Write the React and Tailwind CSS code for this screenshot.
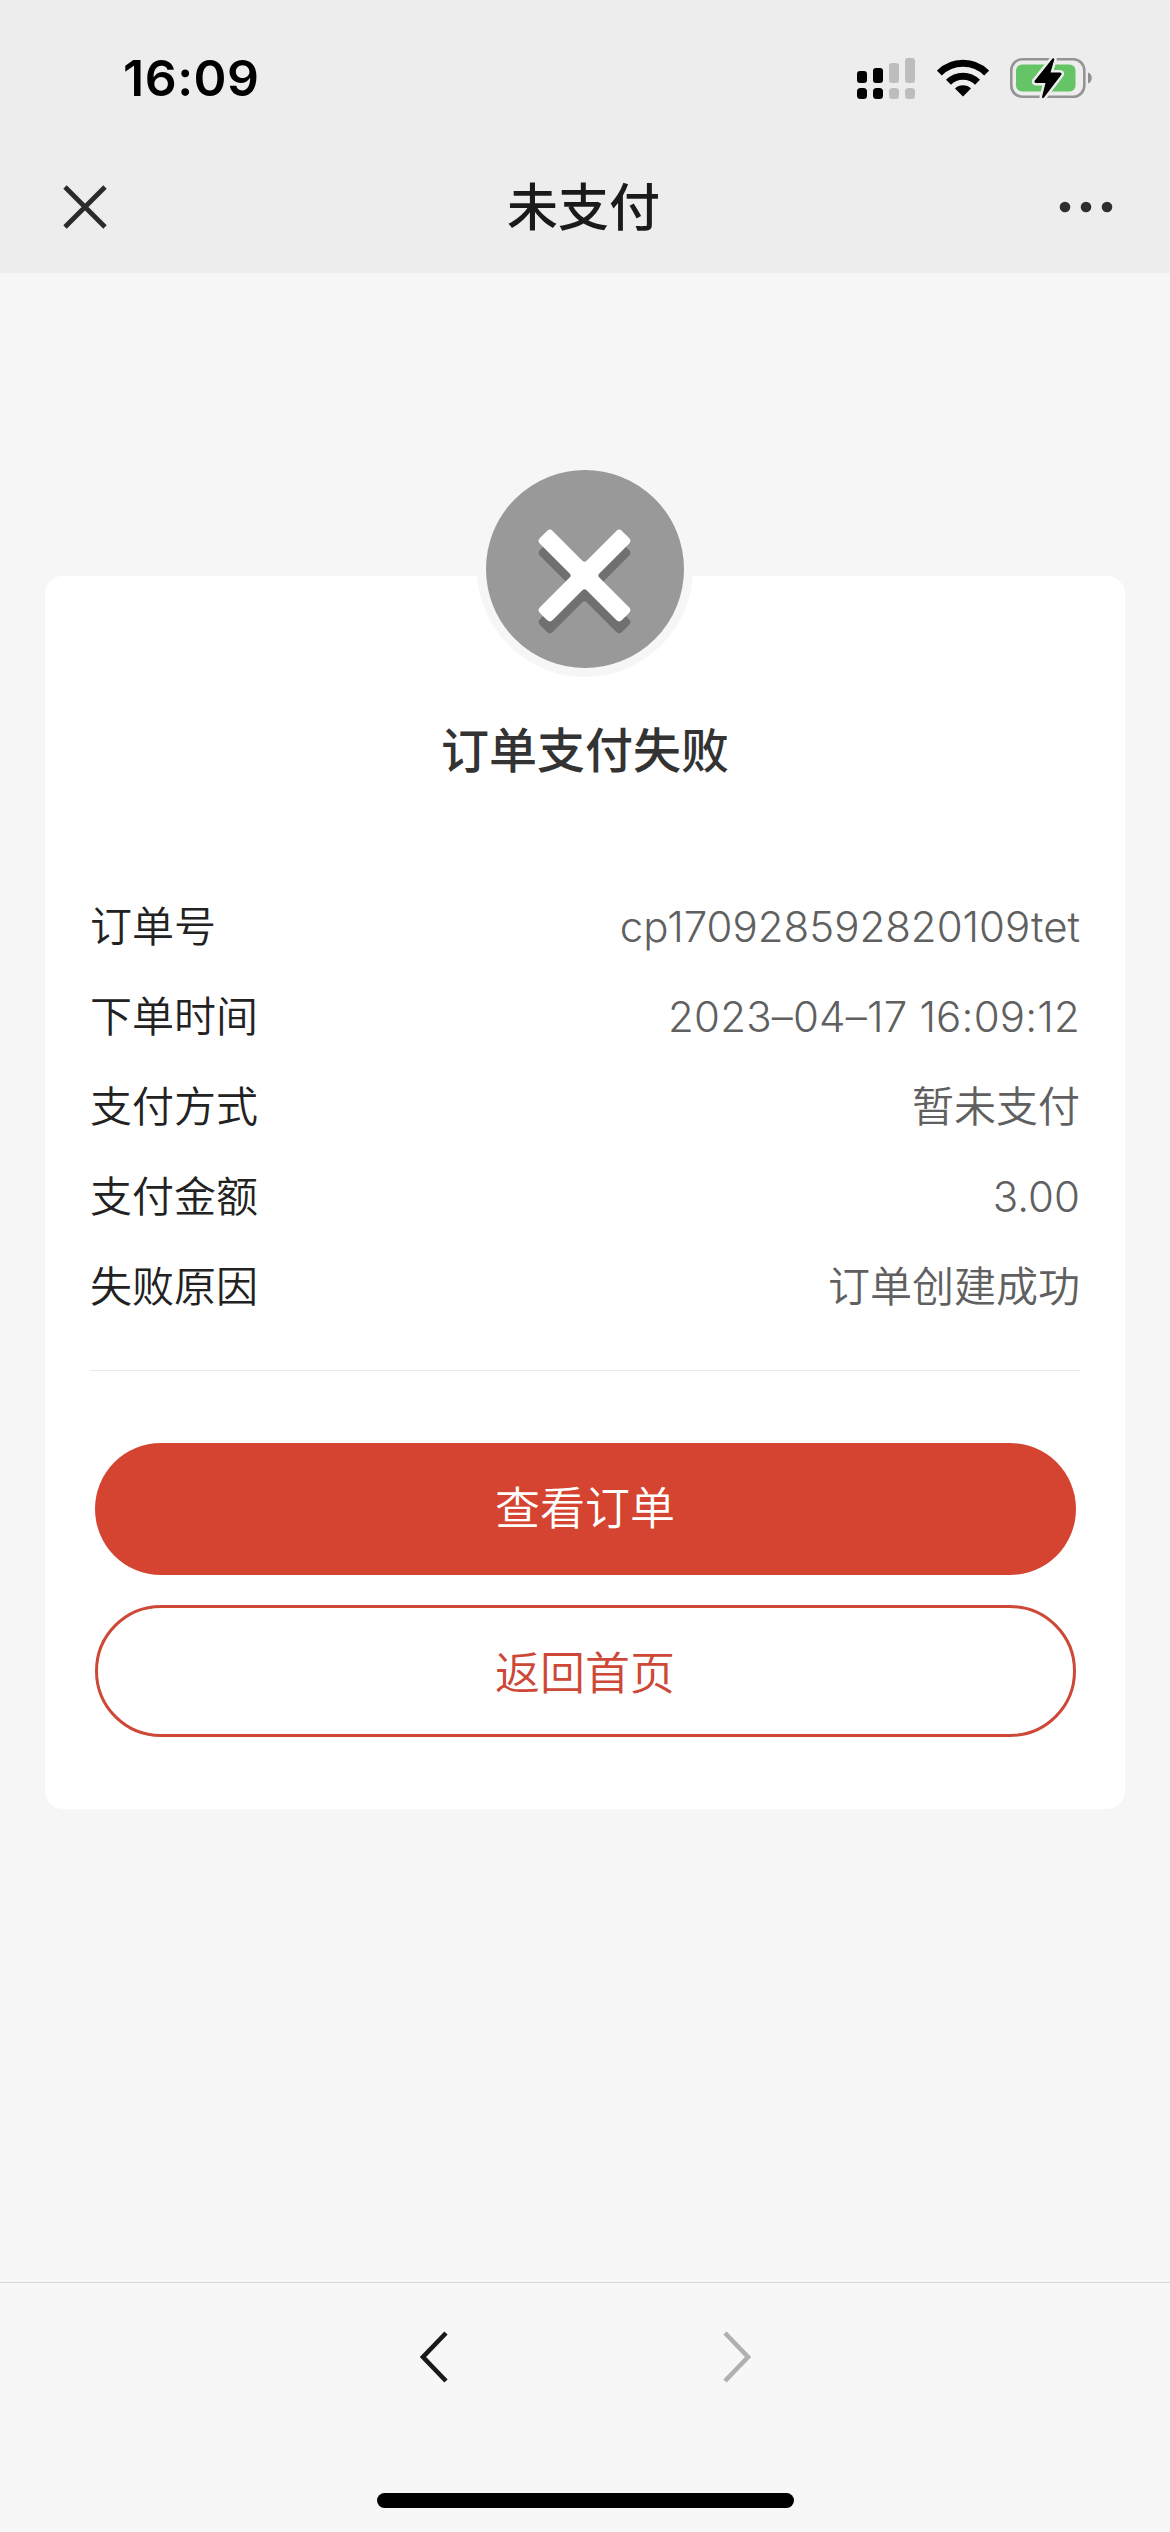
import React from "react";

const details = [
  { label: "订单号", value: "cp170928592820109tet" },
  { label: "下单时间", value: "2023–04–17 16:09:12", className: "tracking-[0.2px]" },
  { label: "支付方式", value: "暂未支付" },
  { label: "支付金额", value: "3.00" },
  { label: "失败原因", value: "订单创建成功" },
];

const crossPath =
  "M-9-54a4 4 0 0 1 4-4H5a4 4 0 0 1 4 4V-12a3 3 0 0 0 3 3H54a4 4 0 0 1 4 4V5a4 4 0 0 1-4 4H12a3 3 0 0 0-3 3V54a4 4 0 0 1-4 4H-5a4 4 0 0 1-4-4V12a3 3 0 0 0-3-3H-54a4 4 0 0 1-4-4V-5a4 4 0 0 1 4-4H-12a3 3 0 0 0 3-3Z";

const SignalIcon = () => (
  <svg className="w-[58px] h-[42px]" viewBox="0 0 58 42">
    <g fill="#000">
      <rect x="0" y="14" width="10" height="12" rx="3" />
      <rect x="16" y="11" width="10" height="15" rx="3" />
      <rect x="0" y="31" width="10" height="11" rx="3.5" />
      <rect x="16" y="31" width="10" height="11" rx="3.5" />
    </g>
    <g fill="#bdbdbd">
      <rect x="32" y="6" width="10" height="20" rx="3" />
      <rect x="48" y="1" width="10" height="25" rx="3" />
      <rect x="32" y="31" width="10" height="11" rx="3.5" />
      <rect x="48" y="31" width="10" height="11" rx="3.5" />
    </g>
  </svg>
);

const WifiIcon = () => (
  <svg className="w-[52px] h-[38px]" viewBox="0 0 52 38">
    <g fill="none" stroke="#000" strokeWidth="7">
      <path d="M2.3 14.1a33.5 33.5 0 0 1 47.4 0" />
      <path d="M11.5 23.3a20.5 20.5 0 0 1 29 0" />
    </g>
    <path d="M26 37.5 18 29.5a11.5 11.5 0 0 1 16 0Z" />
  </svg>
);

const BatteryIcon = () => (
  <svg className="w-[84px] h-[44px]" viewBox="0 0 84 44">
    <rect x="1.3" y="3.3" width="73" height="37.4" rx="11" fill="none" stroke="#949396" strokeWidth="2.6" />
    <rect x="6" y="8.5" width="59.5" height="27" rx="6" fill="#65c466" />
    <path d="M78 16.5c5 1.5 5 9.5 0 11Z" fill="#8e8d90" />
    <path
      d="M42.5 2.5 24.5 25Q24 27 26 27H35.5L32 41Q32.2 43 34 41.5L51.5 18.5Q52 16.5 50 16.5H40.5L44.3 3.5Q44 1.8 42.5 2.5Z"
      fill="#000"
      stroke="#ededed"
      strokeWidth="5"
      paintOrder="stroke"
    />
  </svg>
);

const StatusBar = () => (
  <div className="flex items-center justify-between h-[156px] pl-[123px] pr-[76px]">
    <span className="text-[50px] leading-none font-semibold text-black tracking-[0.5px]">16:09</span>
    <div className="flex items-center gap-[21.5px]">
      <SignalIcon />
      <WifiIcon />
      <BatteryIcon />
    </div>
  </div>
);

const NavBar = () => (
  <div className="flex items-center justify-between h-[102px] pl-[62px] pr-[57px]">
    <svg className="w-[46px] h-[46px]" viewBox="0 0 46 46">
      <path d="M3 3 43 43M43 3 3 43" stroke="#2b2b2b" strokeWidth="4.8" />
    </svg>
    <h1 className="text-[51px] leading-none font-medium text-[#1a1a1a]">未支付</h1>
    <svg className="w-[54px] h-[12px]" viewBox="0 0 54 12" fill="#2e2e2e">
      <circle cx="6" cy="6" r="5.3" />
      <circle cx="27" cy="6" r="5.3" />
      <circle cx="48" cy="6" r="5.3" />
    </svg>
  </div>
);

const App = () => {
  return (
    <div className="flex flex-col w-[1170px] h-[2532px] bg-[#f6f6f6] font-['Inter','Noto_Sans_CJK_SC',sans-serif]">
      <header className="h-[273px] bg-[#ededed]">
        <StatusBar />
        <NavBar />
      </header>

      <main className="flex-1 px-[45px] pt-[303px]">
        <section className="flex flex-col items-center h-[1233px] px-[45px] bg-white rounded-[18px]">
          <div className="-mt-[115px] w-[216px] h-[216px] shrink-0 rounded-full border-[9px] border-[#f6f6f6] bg-[#999]">
            <svg className="w-[198px] h-[198px]" viewBox="-99 -99 198 198">
              <path d={crossPath} fill="#707070" transform="translate(-.5 18.5) rotate(45)" />
              <path d={crossPath} fill="#fff" transform="translate(-.5 6.5) rotate(45)" />
            </svg>
          </div>

          <h2 className="mt-[49px] text-[48px] leading-[50px] font-medium text-[#333]">订单支付失败</h2>

          <dl className="w-full mt-[106px] pb-[38px] border-b border-[#e9e9e9]">
            {details.map((item) => (
              <div key={item.label} className="flex items-center justify-between h-[90px] text-[42px] leading-none font-[350]">
                <dt className="text-[#222]">{item.label}</dt>
                <dd className={`text-[#606060] ${item.className || ""}`}>{item.value}</dd>
              </div>
            ))}
          </dl>

          <button className="mt-[72px] w-[981px] h-[132px] shrink-0 rounded-full bg-[#d54431] text-white text-[45px] font-[350]">查看订单</button>
          <button className="mt-[30px] pt-[5px] w-[981px] h-[132px] shrink-0 rounded-full border-[3px] border-[#cd4836] text-[#cd4836] text-[45px] font-[350]">返回首页</button>
        </section>
      </main>

      <footer className="flex flex-col items-center justify-between h-[250px] pt-[48px] pb-[24px] border-t border-[#d9d9d9] bg-[#f7f7f7]">
        <div className="flex justify-between w-[331px]">
          <svg className="w-[28px] h-[52px]" viewBox="0 0 28 52">
            <path d="M26 2 3 26 26 50" fill="none" stroke="#1a1a1a" strokeWidth="4.6" />
          </svg>
          <svg className="w-[28px] h-[52px]" viewBox="0 0 28 52">
            <path d="M2 2 25 26 2 50" fill="none" stroke="#b0b0b0" strokeWidth="4.6" />
          </svg>
        </div>
        <div className="w-[417px] h-[15px] rounded-full bg-black" />
      </footer>
    </div>
  );
};

export default App;
